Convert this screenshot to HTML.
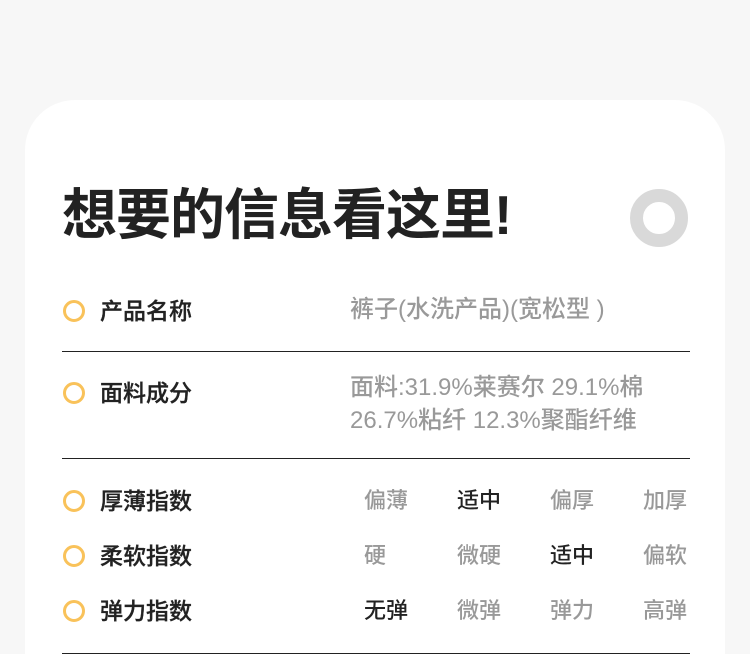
<!DOCTYPE html>
<html><head><meta charset="utf-8"><style>
*{margin:0;padding:0;box-sizing:border-box}
html,body{width:750px;height:654px;overflow:hidden}
body{background:#f7f7f7;position:relative;font-family:"Liberation Sans","Noto Sans CJK SC",sans-serif}
.card{position:absolute;left:25px;top:100px;width:700px;height:554px;background:#fff;border-radius:50px 50px 0 0}
.t{position:absolute;left:62px;top:180px;font-size:55px;font-weight:bold;color:#222;line-height:70px;letter-spacing:-1px}
.ring{position:absolute;left:630px;top:189px;width:58px;height:58px;border-radius:50%;border:13px solid #d9d9d9}
.dot{position:absolute;left:63px;width:22px;height:22px;border-radius:50%;border:3px solid #f9c25a}
.lb{position:absolute;left:100px;font-size:23px;font-weight:500;color:#222;line-height:30px;-webkit-text-stroke:0.3px #222}
.v{position:absolute;left:350px;font-size:24px;font-weight:500;color:#999;line-height:30px}
.line{position:absolute;left:62px;width:628px;height:1px;background:#222}
.o{position:absolute;font-size:22px;font-weight:500;color:#999;line-height:30px;width:80px;text-align:center}
.o.b{color:#222}
</style></head><body>
<div class="card"></div>
<div class="t">想要的信息看这里!</div>
<div class="ring"></div>
<div class="dot" style="top:300px"></div><div class="lb" style="top:296px">产品名称</div>
<div class="v" style="top:295px">裤子(水洗产品)(宽松型 )</div>
<div class="line" style="top:351px"></div>
<div class="dot" style="top:382px"></div><div class="lb" style="top:378px">面料成分</div>
<div class="v" style="top:373px">面料:31.9%莱赛尔 29.1%棉</div>
<div class="v" style="top:406px">26.7%粘纤 12.3%聚酯纤维</div>
<div class="line" style="top:458px"></div>
<div class="dot" style="top:490px"></div><div class="lb" style="top:486px">厚薄指数</div>
<div class="o" style="left:346px;top:486px">偏薄</div><div class="o b" style="left:439px;top:486px">适中</div><div class="o" style="left:532px;top:486px">偏厚</div><div class="o" style="left:625px;top:486px">加厚</div>
<div class="dot" style="top:545px"></div><div class="lb" style="top:541px">柔软指数</div>
<div class="o" style="left:335px;top:541px">硬</div><div class="o" style="left:439px;top:541px">微硬</div><div class="o b" style="left:532px;top:541px">适中</div><div class="o" style="left:625px;top:541px">偏软</div>
<div class="dot" style="top:600px"></div><div class="lb" style="top:596px">弹力指数</div>
<div class="o b" style="left:346px;top:596px">无弹</div><div class="o" style="left:439px;top:596px">微弹</div><div class="o" style="left:532px;top:596px">弹力</div><div class="o" style="left:625px;top:596px">高弹</div>
<div class="line" style="top:653px"></div>
</body></html>
